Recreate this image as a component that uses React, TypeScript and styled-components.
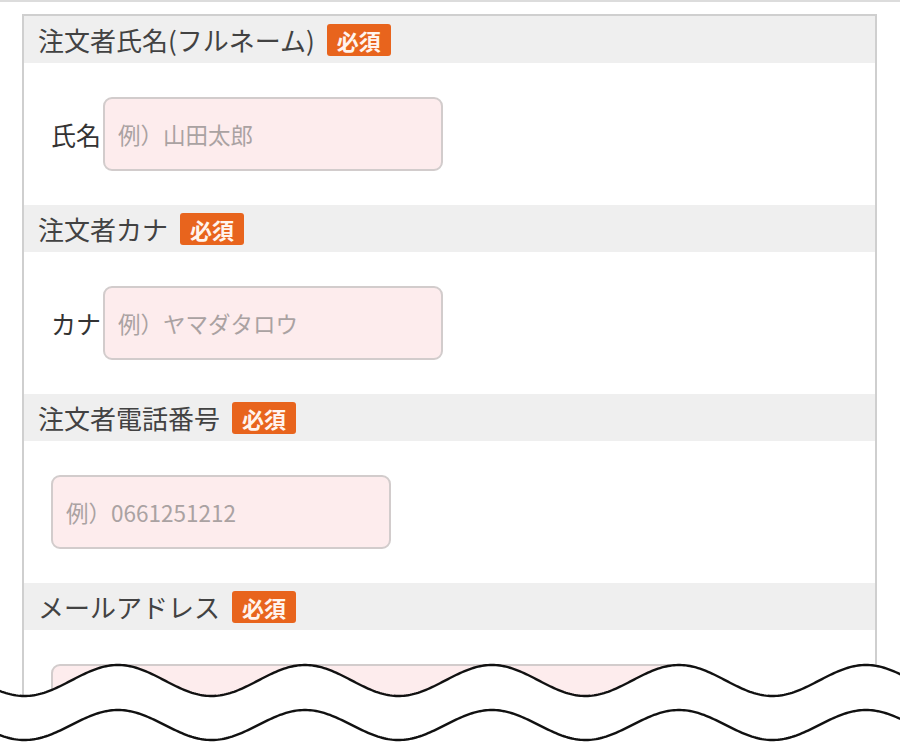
import { FC } from 'react';
import styled, { createGlobalStyle } from 'styled-components';

const GlobalStyle = createGlobalStyle`
    html, body {
        margin: 0;
        padding: 0;
        background: #ffffff;
        overflow: hidden;
    }
    body {
        font-family: "Noto Sans CJK JP", "Noto Sans", sans-serif;
        color: #3c3c3c;
    }
`;

const Page = styled.div`
    position: relative;
    width: 900px;
    height: 744px;
    overflow: hidden;
    border-top: 2px solid #dcdcdc;
    box-sizing: border-box;
`;

const Panel = styled.div`
    margin: 12px 23px 0 22px;
    border: 2px solid #cfcfcf;
`;

const SectionHeader = styled.div`
    display: flex;
    align-items: center;
    gap: 12px;
    height: 47px;
    padding-left: 14px;
    background: #efefef;
`;

const HeaderTitle = styled.span`
    font-size: 26px;
    line-height: 1;
    color: #424242;
`;

const RequiredBadge = styled.span`
    display: inline-flex;
    align-items: center;
    justify-content: center;
    height: 32px;
    padding: 0 10px;
    border-radius: 3px;
    background: #e8641d;
    color: #fff4ee;
    font-size: 22px;
    font-weight: 700;
    line-height: 1;
`;

const SectionBody = styled.div`
    display: flex;
    align-items: center;
    padding: 34px 0 34px 27px;
`;

const FieldLabel = styled.label`
    font-size: 25px;
    line-height: 1;
    color: #333333;
    margin-right: 2px;
`;

const TextInput = styled.input<{ $wide?: boolean }>`
    box-sizing: border-box;
    width: ${(p) => (p.$wide ? '626px' : '340px')};
    height: 74px;
    padding: 0 13px;
    border: 2px solid #d2cccc;
    border-radius: 9px;
    background: #fdeced;
    font-family: "Noto Sans CJK JP", "Noto Sans", sans-serif;
    font-size: 22.5px;
    color: #333;
    outline: none;

    &::placeholder {
        color: #aaa2a2;
    }
`;

const WaveOverlay = styled.svg`
    position: absolute;
    left: 0;
    top: 652px;
    display: block;
`;

interface IField {
    title: string;
    label?: string;
    placeholder: string;
    wide?: boolean;
}

const fields: IField[] = [
    { title: '注文者氏名(フルネーム)', label: '氏名', placeholder: '例）山田太郎' },
    { title: '注文者カナ', label: 'カナ', placeholder: '例）ヤマダタロウ' },
    { title: '注文者電話番号', placeholder: '例）0661251212' },
    { title: 'メールアドレス', placeholder: '', wide: true },
];

const FormSection: FC<{ field: IField }> = ({ field }) => (
    <>
        <SectionHeader>
            <HeaderTitle>{field.title}</HeaderTitle>
            <RequiredBadge>必須</RequiredBadge>
        </SectionHeader>
        <SectionBody>
            {field.label && <FieldLabel>{field.label}</FieldLabel>}
            <TextInput placeholder={field.placeholder} $wide={field.wide} readOnly />
        </SectionBody>
    </>
);

// sine line used for the "cut off" mark at the bottom
const wavePoints = (cy: number, amp: number, period: number, peakX: number, width: number) => {
    const pts: string[] = [];
    for (let x = -4; x <= width + 4; x += 2) {
        const y = cy - amp * Math.cos((2 * Math.PI * (x - peakX)) / period);
        pts.push(`${x},${y.toFixed(2)}`);
    }
    return pts;
};

const CutMark: FC = () => {
    const w = 900;
    const h = 92;
    const top = wavePoints(26.5, 15.5, 187, 118, w);
    const bottom = wavePoints(71, 15, 187, 118, w);
    return (
        <WaveOverlay width={w} height={h} viewBox={`0 0 ${w} ${h}`}>
            <path d={`M${top.join(' L')} L${w + 4},${h} L-4,${h} Z`} fill="#ffffff" />
            <path d={`M${top.join(' L')}`} fill="none" stroke="#111" strokeWidth={2.4} />
            <path d={`M${bottom.join(' L')}`} fill="none" stroke="#111" strokeWidth={2.4} />
        </WaveOverlay>
    );
};

export default function App() {
    return (
        <>
            <GlobalStyle />
            <Page>
                <Panel>
                    {fields.map((f) => (
                        <FormSection key={f.title} field={f} />
                    ))}
                </Panel>
                <CutMark />
            </Page>
        </>
    );
}
